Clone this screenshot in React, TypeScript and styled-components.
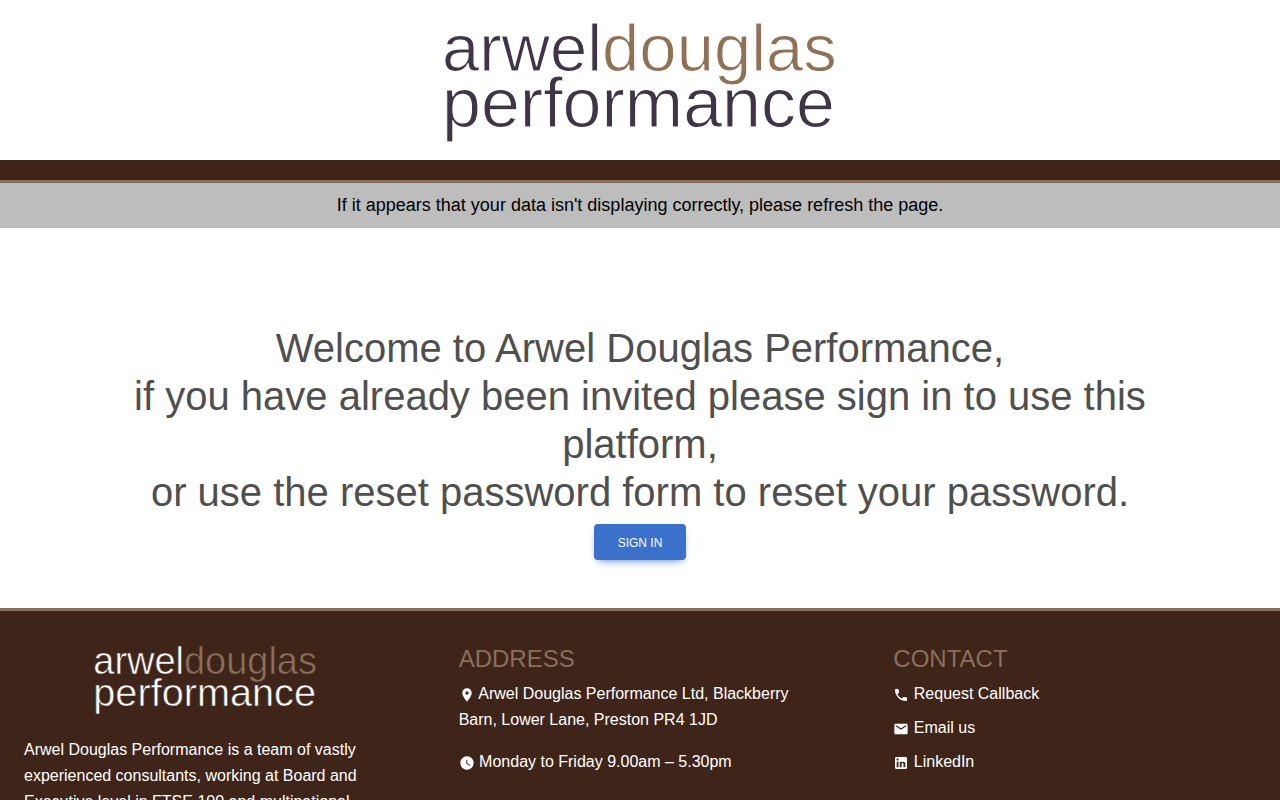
import React from "react";
import styled, { createGlobalStyle } from "styled-components";
import { MdEmail, MdLocationOn, MdPhone, MdWatchLater } from "react-icons/md";

const BROWN = "#3f2419";
const TAN = "#8b6f5a";

const GlobalStyle = createGlobalStyle`
  *, *::before, *::after {
    box-sizing: border-box;
  }

  body {
    margin: 0;
    background: #fff;
    color: #4f4f4f;
    font-family: "Liberation Sans", Arial, sans-serif;
    font-size: 16px;
    line-height: 26px;
  }
`;

const Header = styled.header`
  display: flex;
  justify-content: center;
  padding: 20px 24px;
`;

/* The outline takes the background colour, which thins the letters to a light weight. */
const LogoSvg = styled.svg<{ $width: number; $background: string }>`
  display: block;
  width: ${(p) => p.$width}px;
  max-width: 100%;
  height: auto;
  overflow: visible;
  font-family: "Liberation Sans", Arial, sans-serif;
  stroke: ${(p) => p.$background};
  stroke-width: 1;
`;

const NavBar = styled.div`
  height: 23px;
  background: ${BROWN};
  border-bottom: 3px solid ${TAN};
`;

const Notice = styled.p`
  margin: 0;
  padding: 9px 24px;
  background: #bdbdbd;
  border-bottom: 1px solid #b8b8b8;
  color: #000;
  font-size: 18px;
  text-align: center;
`;

const Main = styled.main`
  display: flex;
  flex-direction: column;
  align-items: center;
  gap: 8px;
  padding: 96px 72px 48px;
`;

const Title = styled.h1`
  margin: 0;
  font-size: 40px;
  font-weight: 400;
  line-height: 48px;
  text-align: center;
`;

const SignInButton = styled.button`
  height: 36px;
  padding: 2px 24px 0;
  border: 0;
  border-radius: 4px;
  background: #3b71ca;
  box-shadow: 0 4px 9px -4px #3b71ca;
  color: #fff;
  font-family: inherit;
  font-size: 12px;
  text-transform: uppercase;
  cursor: pointer;
`;

const Footer = styled.footer`
  display: grid;
  grid-template-columns: repeat(3, 1fr);
  gap: 72px;
  padding: 34px 24px 24px;
  background: ${BROWN};
  border-top: 3px solid ${TAN};
  color: #fff;

  p svg,
  a svg {
    width: 16px;
    height: 16px;
    vertical-align: -4px;
  }
`;

const LogoHolder = styled.div`
  display: flex;
  justify-content: center;
  margin-bottom: 24px;
`;

const FooterTitle = styled.h2`
  margin: 0 0 8px;
  color: ${TAN};
  font-size: 24px;
  font-weight: 400;
  line-height: 28px;
  text-transform: uppercase;
`;

const FooterText = styled.p`
  margin: 0 0 16px;
`;

const LinkList = styled.ul`
  display: grid;
  gap: 8px;
  margin: 0;
  padding: 0;
  list-style: none;
`;

const FooterLink = styled.a`
  color: inherit;
  text-decoration: none;
`;

interface LogoProps {
  width: number;
  color: string;
  accent: string;
  background: string;
}

function Logo({ width, color, accent, background }: LogoProps) {
  return (
    <LogoSvg
      $width={width}
      $background={background}
      viewBox="0 0 390 120"
      role="img"
      aria-label="Arwel Douglas Performance"
    >
      <text x="-3" y="107" fontSize="70" fill={color}>
        performance
      </text>
      <text x="-3" y="51" fontSize="67" fill={color}>
        arwel<tspan fill={accent}>douglas</tspan>
      </text>
    </LogoSvg>
  );
}

function LinkedInIcon() {
  return (
    <svg viewBox="0 0 24 24" fill="currentColor" aria-hidden="true">
      <path d="M19 3a2 2 0 0 1 2 2v14a2 2 0 0 1-2 2H5a2 2 0 0 1-2-2V5a2 2 0 0 1 2-2h14m-.5 15.5v-5.3a3.26 3.26 0 0 0-3.26-3.26c-.85 0-1.84.52-2.32 1.3v-1.11h-2.79v8.37h2.79v-4.93c0-.77.62-1.4 1.39-1.4a1.4 1.4 0 0 1 1.4 1.4v4.93h2.79M6.88 8.56a1.68 1.68 0 0 0 1.68-1.68c0-.93-.75-1.69-1.68-1.69a1.69 1.69 0 0 0-1.69 1.69c0 .93.76 1.68 1.69 1.68m1.39 9.94v-8.37H5.5v8.37h2.77z" />
    </svg>
  );
}

export default function App() {
  return (
    <>
      <GlobalStyle />
      <Header>
        <Logo width={390} color="#3f3547" accent="#8f7156" background="#fff" />
      </Header>
      <NavBar />
      <Notice>If it appears that your data isn't displaying correctly, please refresh the page.</Notice>
      <Main>
        <Title>
          Welcome to Arwel Douglas Performance,
          <br />
          if you have already been invited please sign in to use this platform,
          <br />
          or use the reset password form to reset your password.
        </Title>
        <SignInButton type="button">Sign in</SignInButton>
      </Main>
      <Footer>
        <section>
          <LogoHolder>
            <Logo width={221} color="#fff" accent={TAN} background={BROWN} />
          </LogoHolder>
          <FooterText>
            Arwel Douglas Performance is a team of vastly experienced consultants, working at Board and
            Executive level in FTSE 100 and multinational
          </FooterText>
        </section>
        <section>
          <FooterTitle>Address</FooterTitle>
          <FooterText>
            <MdLocationOn aria-hidden="true" /> Arwel Douglas Performance Ltd, Blackberry Barn, Lower
            Lane, Preston PR4 1JD
          </FooterText>
          <FooterText>
            <MdWatchLater aria-hidden="true" /> Monday to Friday 9.00am – 5.30pm
          </FooterText>
        </section>
        <section>
          <FooterTitle>Contact</FooterTitle>
          <LinkList>
            <li>
              <FooterLink href="#callback">
                <MdPhone aria-hidden="true" /> Request Callback
              </FooterLink>
            </li>
            <li>
              <FooterLink href="#email">
                <MdEmail aria-hidden="true" /> Email us
              </FooterLink>
            </li>
            <li>
              <FooterLink href="#linkedin">
                <LinkedInIcon /> LinkedIn
              </FooterLink>
            </li>
          </LinkList>
        </section>
      </Footer>
    </>
  );
}
